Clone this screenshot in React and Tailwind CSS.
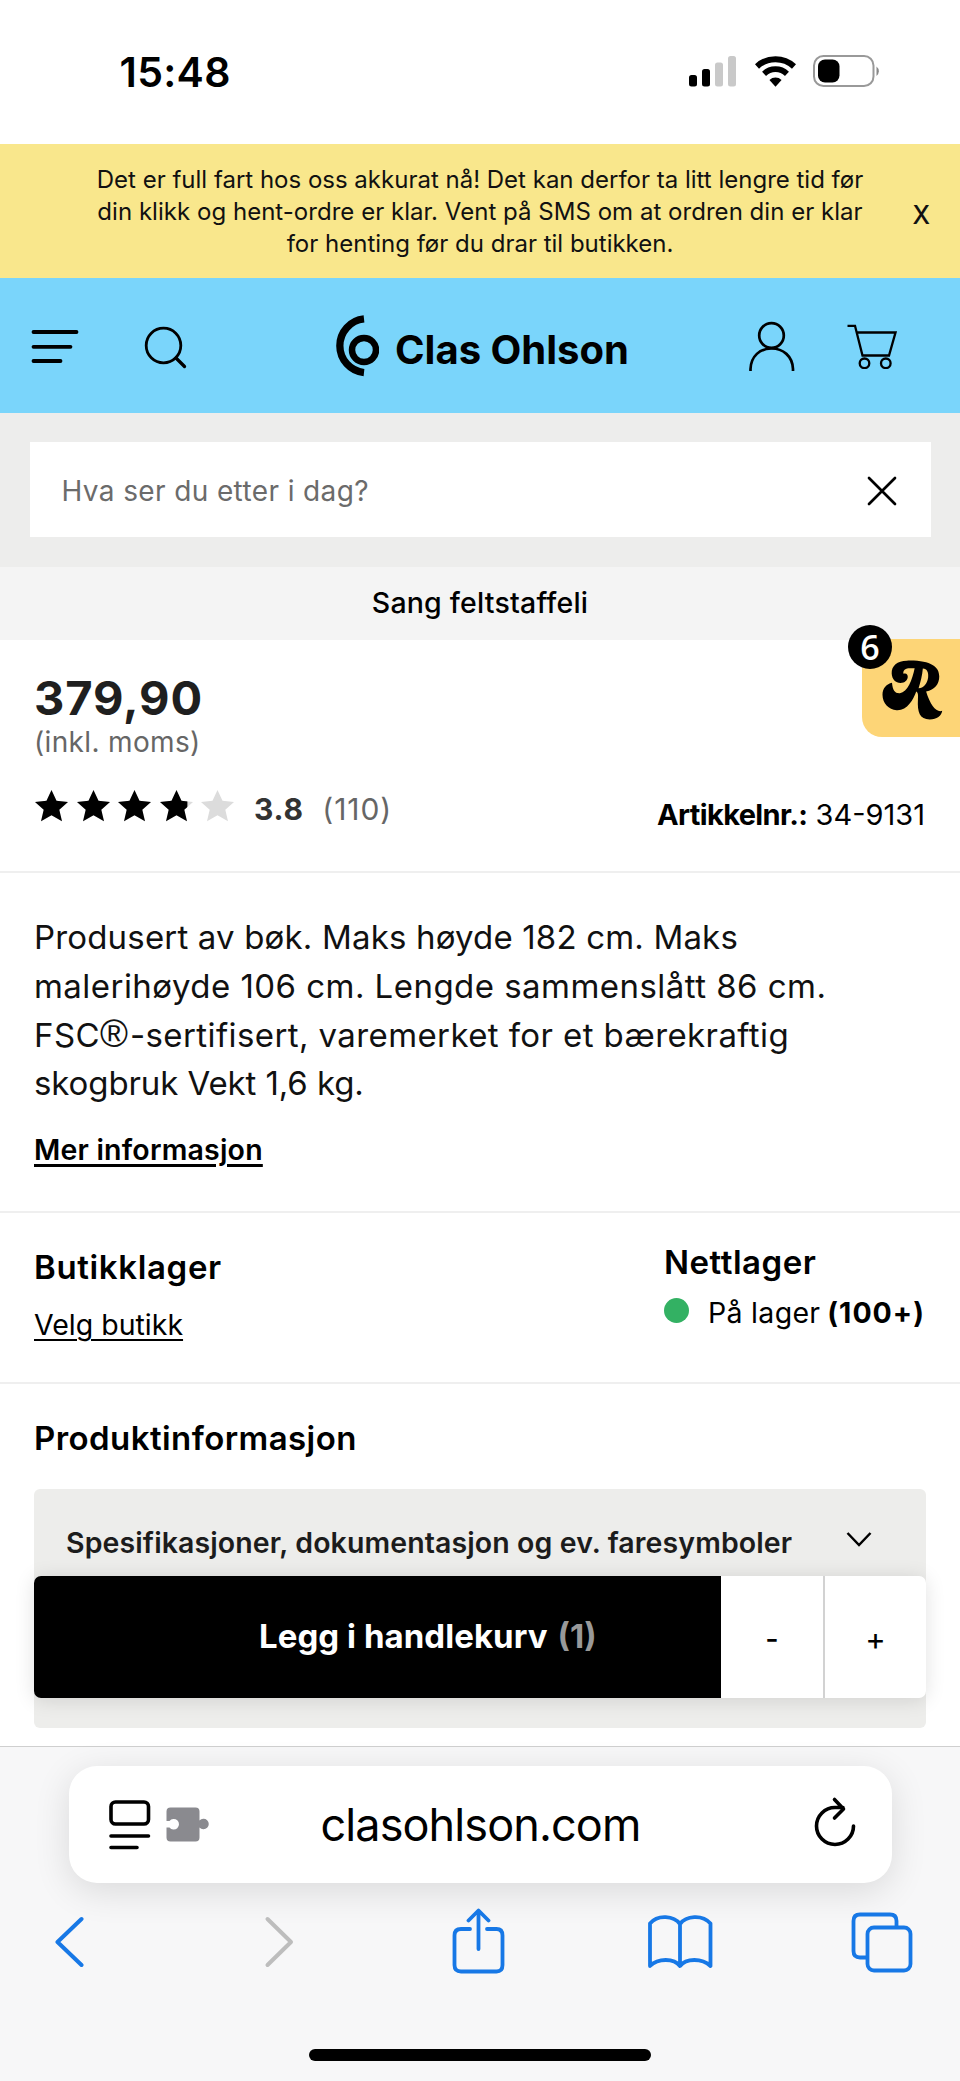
import { useState } from 'react';

const StatusIcons = () => (
  <div className="flex items-start pt-[55px] pr-[79px]">
    <svg className="mt-px h-[31px] w-[48px]" viewBox="0 0 48 31">
      <rect x="0" y="19" width="8" height="11.5" rx="2.5" />
      <rect x="13" y="13" width="8" height="17.5" rx="2.5" />
      <rect x="26" y="6.500" width="8" height="24" rx="2.5" fill="#c9c9c9" />
      <rect x="39" y="0" width="8" height="30.500" rx="2.5" fill="#c9c9c9" />
    </svg>
    <svg className="ml-[18px] mt-px h-[31px] w-[41px]" viewBox="0 0 120 92" fill="none" stroke="#000">
      <path d="M5 31 A81 81 0 0 1 115 31" strokeWidth="18" />
      <path d="M26 53 A49 49 0 0 1 94 53" strokeWidth="17" />
      <path d="M60 91 L42 71 A27 27 0 0 1 78 71 Z" fill="#000" stroke="none" />
    </svg>
    <svg className="ml-[17px] h-[32px] w-[68px]" viewBox="0 0 68 32">
      <rect x="1" y="1" width="59.500" height="30" rx="9.500" fill="#fff" stroke="#999" strokeWidth="2" />
      <rect x="5" y="4.500" width="21.500" height="23" rx="7" />
      <path d="M63.500 11.500 A6 6 0 0 1 63.500 21 Z" fill="#888" />
    </svg>
  </div>
);

const Logo = () => (
  <svg className="h-[62px] w-[46px]" viewBox="0 0 46 62" fill="none" stroke="#000">
    <path d="M31 3.900 A27 27 0 0 0 31 57.600" strokeWidth="7.300" />
    <circle cx="31" cy="35" r="12" strokeWidth="6.500" />
  </svg>
);

const Star = ({ fill }) => (
  <svg className="h-[32px] w-[33px]" viewBox="0 0 33 32">
    <defs>
      <clipPath id={`star-${fill}`}>
        <rect x="0" y="0" width={33 * fill} height="32" />
      </clipPath>
    </defs>
    <path d="M16.500 0 L21.500 10.800 L33 12 L24.300 19.700 L27 31.300 L16.500 25.200 L6 31.300 L8.700 19.700 L0 12 L11.500 10.800 Z" fill="#dcdcdc" />
    <path
      d="M16.500 0 L21.500 10.800 L33 12 L24.300 19.700 L27 31.300 L16.500 25.200 L6 31.300 L8.700 19.700 L0 12 L11.500 10.800 Z"
      clipPath={`url(#star-${fill})`}
    />
  </svg>
);

const App = () => {
  const [quantity, setQuantity] = useState(1);

  return (
    <div className="flex h-[2081px] w-[960px] flex-col overflow-hidden bg-white font-['Inter','Liberation_Sans',sans-serif] text-black">

      {/* status bar */}
      <div className="flex h-[144px] shrink-0 justify-between">
        <span className="pl-[119.500px] pt-[47px] text-[41px] leading-[50px] font-semibold tracking-[0.3px]">15:48</span>
        <StatusIcons />
      </div>

      {/* notice */}
      <div className="relative h-[134px] shrink-0 bg-[#f9e78c] pt-[20px] text-center text-[24px] leading-[32px] text-[#111]">
        <p className="whitespace-nowrap">Det er full fart hos oss akkurat nå! Det kan derfor ta litt lengre tid før</p>
        <p className="tracking-[0.03px] whitespace-nowrap">din klikk og hent-ordre er klar. Vent på SMS om at ordren din er klar</p>
        <p className="whitespace-nowrap">for henting før du drar til butikken.</p>
        <button className="absolute top-[55px] right-[30px] text-[25px] leading-[32px] font-medium">X</button>
      </div>

      {/* header */}
      <header className="flex h-[135px] shrink-0 items-start bg-[#7ad5fb]">
        <svg className="mt-[51px] ml-[31px] h-[34px] w-[48px]" viewBox="0 0 48 34" stroke="#000" strokeWidth="3.800" strokeLinecap="round">
          <path d="M2.500 3 H45.500 M2.500 17.800 H39.500 M2.500 32 H29.500" />
        </svg>
        <svg className="mt-[48px] ml-[65px] h-[44px] w-[44px]" viewBox="0 0 44 44" fill="none" stroke="#000" strokeWidth="2.800">
          <circle cx="19.500" cy="19.500" r="17.300" />
          <path d="M32 32 L40.500 40.500" strokeLinecap="round" strokeWidth="3.300" />
        </svg>
        <div className="ml-[145px] flex items-start pt-[37px]">
          <Logo />
          <span className="ml-[16px] w-[235px] pt-[10px] text-[40px] leading-[50px] font-bold whitespace-nowrap">Clas Ohlson</span>
        </div>
        <svg className="mt-[43px] ml-[119px] h-[50px] w-[46px]" viewBox="0 0 46 50" fill="none" stroke="#000" strokeWidth="2.700">
          <circle cx="22.500" cy="14.500" r="12.300" />
          <path d="M1.500 50 V48 C2 35 11 27.500 22.500 27.500 S43.500 35 44 48 V50" />
        </svg>
        <svg className="mt-[45px] ml-[52px] h-[46px] w-[50px]" viewBox="0 0 50 46" fill="none" stroke="#000" strokeWidth="2.300">
          <path d="M0.500 2.800 H8 L15.500 32.500 H42 L48.500 9.500 H9.800" />
          <circle cx="17.500" cy="40.300" r="4.800" />
          <circle cx="38.800" cy="40.300" r="4.800" />
        </svg>
      </header>

      {/* search */}
      <div className="h-[154px] shrink-0 bg-[#ededec] px-[29.500px] pt-[29px]">
        <div className="flex h-[95px] items-center justify-between bg-white pr-[34px] pl-[32px]">
          <span className="pt-[2px] text-[28px] tracking-[0.38px] text-[#6b6b6b]">Hva ser du etter i dag?</span>
          <svg className="mt-[2px] h-[30px] w-[30px]" viewBox="0 0 30 30" stroke="#000" strokeWidth="2.700" strokeLinecap="round">
            <path d="M2 2 L28 28 M28 2 L2 28" />
          </svg>
        </div>
      </div>

      {/* product name */}
      <div className="h-[73px] shrink-0 bg-[#f4f4f4] text-center text-[28.500px] leading-[72px] font-medium tracking-[0.2px]">
        Sang feltstaffeli
      </div>

      {/* price */}
      <div className="relative h-[233px] shrink-0 border-b-2 border-[#efefef] px-[34px]">
        <div className="pt-[29px] text-[47px] leading-[58px] font-bold tracking-[0.9px] text-[#1f1f1f]">379,90</div>
        <div className="text-[28px] leading-[30px] tracking-[0.35px] text-[#666]">(inkl. moms)</div>
        <div className="flex items-start justify-between pt-[32px]">
          <div className="flex items-start">
            <div className="flex gap-[8.500px] pt-[1px] pl-px">
              <Star fill={1} />
              <Star fill={1} />
              <Star fill={1} />
              <Star fill={0.83} />
              <Star fill={0} />
            </div>
            <span className="ml-[20px] text-[30px] leading-[40px] font-bold tracking-[0.8px] text-[#333]">3.8</span>
            <span className="ml-[18.500px] text-[30px] leading-[40px] tracking-[0.9px] text-[#666]">(110)</span>
          </div>
          <div className="pt-[6px] pr-px text-[29px] leading-[40px] whitespace-nowrap">
            <span className="font-bold tracking-[-0.65px]">Artikkelnr.:</span>{' '}
            <span>34-9131</span>
          </div>
        </div>

        {/* cashback tab */}
        <div className="absolute top-[-1px] right-0 h-[98px] w-[98px] rounded-l-[20px] bg-[#fdd577]">
          <svg className="absolute top-[20px] left-[18px] h-[63px] w-[66px]" viewBox="120 143 198 192">
            <path d="M200 148 C171 148 153 164 154 187 C155 205 166 216 181 216 C194 216 203 207 203 197 C203 189 198 185 190 188 C188 180 193 172 205 171 L224 171 C217 206 202 244 179 247 C164 248 157 238 155 215 C139 219 126 231 126 252 C126 278 145 297 169 299 C201 301 220 267 229 242 C235 245 235 255 234 267 C232 304 239 327 270 327 C292 327 306 317 308 301 C290 307 272 284 259 242 C285 237 299 219 299 196 C299 166 272 146 200 148 Z" />
            <path d="M249 172 C262 173 267 183 265 200 C262 219 251 232 236 232 C242 214 247 193 249 172 Z" fill="#fdd577" />
          </svg>
          <span className="absolute top-[-14px] left-[-14px] flex h-[44px] w-[44px] items-center justify-center rounded-full bg-black font-['Open_Sans','Inter',sans-serif] text-[34px] leading-[44px] font-semibold text-white">6</span>
        </div>
      </div>

      {/* description */}
      <div className="h-[340px] shrink-0 border-b-2 border-[#efefef] px-[34px] pt-[40px]">
        <div className="text-[33px] leading-[48.800px] whitespace-nowrap text-[#111]">
          <p className="tracking-[0.17px]">Produsert av bøk. Maks høyde 182 cm. Maks</p>
          <p className="tracking-[0.46px]">malerihøyde 106 cm. Lengde sammenslått 86 cm.</p>
          <p className="tracking-[0.4px]">
            FSC<span className="font-['Liberation_Sans'] text-[38px] leading-none tracking-[2px]">®</span>-sertifisert, varemerket for et bærekraftig
          </p>
          <p className="tracking-[-0.1px]">skogbruk Vekt 1,6 kg.</p>
        </div>
        <a className="mt-[22px] inline-block text-[28.500px] leading-[40px] font-semibold tracking-[0.2px] underline decoration-[2.500px] underline-offset-[4px]">Mer informasjon</a>
      </div>

      {/* stock */}
      <div className="flex h-[171px] shrink-0 justify-between border-b-2 border-[#efefef] pr-[36px] pl-[34px]">
        <div className="pt-[34px]">
          <h3 className="text-[33px] leading-[40px] font-semibold tracking-[0.65px]">Butikklager</h3>
          <a className="mt-[18px] block text-[28.500px] leading-[40px] underline decoration-[2px] underline-offset-[4px]">Velg butikk</a>
        </div>
        <div className="w-[260px] pt-[29px]">
          <h3 className="text-[33px] leading-[40px] font-semibold tracking-[0.5px]">Nettlager</h3>
          <div className="mt-[11px] flex items-start text-[28.500px] leading-[40px] whitespace-nowrap">
            <span className="mt-[5px] mr-[19px] h-[25px] w-[25px] shrink-0 rounded-full bg-[#33b163]" />
            <span className="tracking-[0.3px]">På lager</span>
            <span className="ml-[7px] font-bold tracking-[1px]">(100+)</span>
          </div>
        </div>
      </div>

      {/* product info */}
      <div className="h-[362px] shrink-0 px-[34px] pt-[34px]">
        <h3 className="text-[33px] leading-[40px] font-semibold tracking-[0.43px]">Produktinformasjon</h3>
        <div className="relative mt-[31px] h-[239px] rounded-[6px] bg-[#ededeb]">
          <div className="flex items-start pt-[34px] pl-[32px] text-[28.500px] leading-[40px] font-semibold whitespace-nowrap text-[#1c1c1c]">
            <span className="w-[727px] shrink-0 tracking-[0.1px]">Spesifikasjoner, dokumentasjon og ev. faresymboler</span>
            <svg className="mt-[8px] ml-[53px] h-[17px] w-[26px] shrink-0" viewBox="0 0 26 17" fill="none" stroke="#000" strokeWidth="2.500">
              <path d="M1.500 2 L13 14 L24.500 2" />
            </svg>
          </div>

          {/* add to cart */}
          <div className="absolute top-[87px] left-0 flex h-[122px] w-full overflow-hidden rounded-[7px] bg-white shadow-[0_2px_20px_rgba(0,0,0,0.12)]">
            <button className="h-full w-[687px] bg-black pl-[225px] text-left text-[33px] font-bold whitespace-nowrap text-white">
              <span className="tracking-[0.05px]">Legg i handlekurv</span>
              <span className="ml-[10px] text-[#999]">({quantity})</span>
            </button>
            <button
              onClick={() => setQuantity(Math.max(1, quantity - 1))}
              className="flex w-[102px] items-center justify-center pt-[4px] text-[29px] font-medium"
            >
              -
            </button>
            <button
              onClick={() => setQuantity(quantity + 1)}
              className="flex flex-1 items-center justify-center border-l-2 border-[#d2d2d2] pt-[4px] text-[31px]"
            >
              +
            </button>
          </div>
        </div>
      </div>

      {/* browser bar */}
      <div className="flex flex-1 flex-col items-center border-t border-[#cfcfcf] bg-[#f7f7f8] pt-[19px]">
        <div className="flex h-[117px] w-[823px] shrink-0 items-start rounded-[28px] bg-white shadow-[0_8px_36px_rgba(0,0,0,0.12)]">
          <svg className="mt-[33px] ml-[39px] h-[52px] w-[44px]" viewBox="0 0 44 52" fill="none" stroke="#000" strokeWidth="3.600" strokeLinecap="round">
            <rect x="3" y="3" width="37.500" height="22" rx="4.500" />
            <path d="M3 37 H40.500 M3 48.500 H29" />
          </svg>
          <svg className="mt-[41px] ml-[14px] h-[36px] w-[44px]" viewBox="0 0 44 36" fill="#8a8a8f">
            <path d="M4.500 0.500 H29.500 Q33.500 0.500 33.500 4.500 V13.500 A5.300 5.300 0 1 1 33.500 20.500 V30.500 Q33.500 34.500 29.500 34.500 H4.500 Q0.500 34.500 0.500 30.500 V20.500 H3.500 A5.300 5.300 0 1 0 3.500 14 H0.500 V4.500 Q0.500 0.500 4.500 0.500 Z" />
          </svg>
          <span className="mt-[31px] ml-[111px] w-[321px] text-[45px] leading-[56px] tracking-[-0.9px] whitespace-nowrap">clasohlson.com</span>
          <svg className="mt-[30px] ml-[171px] h-[52px] w-[44px]" viewBox="0 0 44 52" fill="none" stroke="#000" strokeWidth="3.600" strokeLinecap="round" strokeLinejoin="round">
            <path d="M40.500 30 A18.500 18.500 0 1 1 22 11.500 H30 M21.500 3.500 L30.500 13 L21.500 22" />
          </svg>
        </div>

        <div className="flex w-full shrink-0 items-start pt-[25px]">
          <svg className="mt-[8px] ml-[54px] h-[52px] w-[30px]" viewBox="0 0 30 52" fill="none" stroke="#1778e6" strokeWidth="4" strokeLinecap="round" strokeLinejoin="round">
            <path d="M27.500 3 L3.500 26 L27.500 49" />
          </svg>
          <svg className="mt-[8px] ml-[180px] h-[52px] w-[30px]" viewBox="0 0 30 52" fill="none" stroke="#bdbdbd" strokeWidth="4" strokeLinecap="round" strokeLinejoin="round">
            <path d="M3.500 3 L27 26 L3.500 49" />
          </svg>
          <svg className="ml-[157px] h-[66px] w-[54px]" viewBox="0 0 54 66" fill="none" stroke="#1778e6" strokeWidth="3.800" strokeLinecap="round" strokeLinejoin="round">
            <path d="M19 21 H10 Q3.500 21 3.500 27.500 V57 Q3.500 63.500 10 63.500 H45.500 Q51.500 63.500 51.500 57 V27.500 Q51.500 21 45.500 21 H36" />
            <path d="M27.500 41 V3 M17.500 12.500 L27.500 2.500 L37.500 12.500" />
          </svg>
          <svg className="mt-[6px] ml-[142px] h-[56px] w-[66px]" viewBox="0 0 66 56" fill="none" stroke="#1778e6" strokeWidth="3.800" strokeLinejoin="round">
            <path d="M33 10 C27 2 11 0 3 9.500 V52 C11 44 27 44 33 52 C39 44 55 44 63.500 52 V9.500 C55 0 39 2 33 10 V52" />
          </svg>
          <svg className="mt-[4px] ml-[138px] h-[62px] w-[62px]" viewBox="0 0 62 62" fill="none" stroke="#1778e6" strokeWidth="3.800">
            <rect x="16.500" y="15.500" width="43" height="43" rx="6.500" />
            <path d="M16.500 45.500 H9 Q2.500 45.500 2.500 39 V9 Q2.500 2.500 9 2.500 H39 Q45.500 2.500 45.500 9 V15.500" />
          </svg>
        </div>
        <div className="mt-[75px] h-[12px] w-[342px] shrink-0 rounded-full bg-black" />
      </div>
    </div>
  );
};

export default App;
